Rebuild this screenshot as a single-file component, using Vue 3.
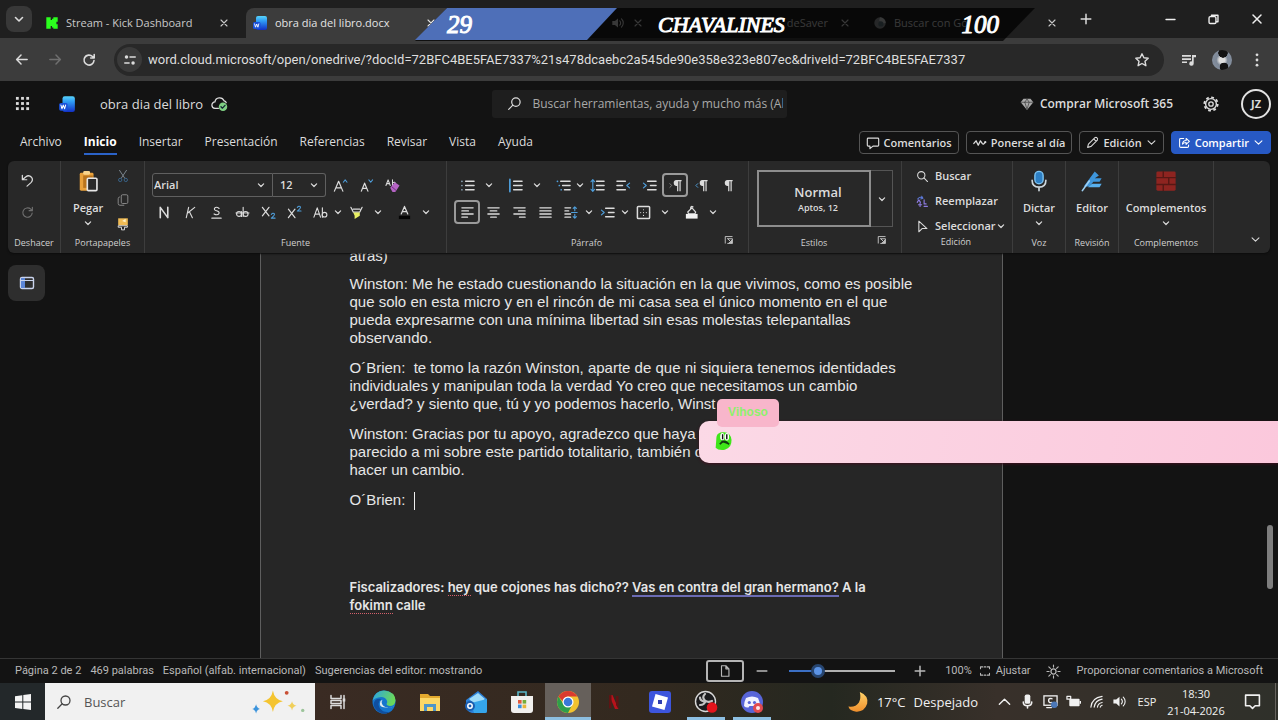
<script setup>
import { h, ref } from 'vue'

const S = (d, w = 1.3, c = 'currentColor') =>
  `<path d="${d}" fill="none" stroke="${c}" stroke-width="${w}" stroke-linecap="round" stroke-linejoin="round"/>`
const F = (d, c = 'currentColor') => `<path d="${d}" fill="${c}"/>`
const BLUE = '#4f9fdc'

const icons = {
  chevron: S('M4.5 6.5 8 10l3.5-3.5', 1.6),
  down: S('M3 5.500 8 10.500l5-5', 1.5),
  up: S('M2.5 11 8 5.5 13.5 11', 1.5),
  close: S('M4 4l8 8M12 4l-8 8', 1.5),
  plus: S('M8 2.5v11M2.5 8h11', 1.7),
  minus: S('M2.5 8h11', 1.7),
  back: S('M14 8H3M7.500 3.300 2.800 8l4.700 4.700', 1.6),
  forward: S('M2 8h11M8.500 3.300 13.200 8l-4.700 4.700', 1.6),
  reload: S('M13 8.500a5 5 0 1 1-1.500-4L13 6M13.200 2.500V6H9.700', 1.6),
  tune: '<circle cx="4" cy="4.500" r="2" fill="currentColor"/><circle cx="11.500" cy="11.500" r="2" fill="currentColor"/>' + S('M8 4.500h6M2 11.500h5', 1.6),
  star: S('M8 1.800l1.900 4 4.300.5-3.200 3 .9 4.400L8 11.500l-3.900 2.200.9-4.400-3.200-3 4.300-.5z', 1.4),
  music: F('M1 3h9v1.700H1zM1 6.200h9v1.700H1zM1 9.400h5v1.700H1z') + F('M11 3h4v2.200h-2.300v6.300a2.200 2.200 0 1 1-1.700-2.100z'),
  dots: '<circle cx="8" cy="2.800" r="1.400" fill="currentColor"/><circle cx="8" cy="8" r="1.400" fill="currentColor"/><circle cx="8" cy="13.200" r="1.400" fill="currentColor"/>',
  restore: '<rect x="2.500" y="4.500" width="8.500" height="8.500" rx="1.500" fill="none" stroke="currentColor" stroke-width="1.700"/>' + S('M5.500 4V2.800h8v8h-1.800', 1.7),
  sound: F('M1.500 5.800h3L8 2.800v10.400L4.500 10.200h-3z') + S('M10 5.500a3.500 3.500 0 0 1 0 5M12 3.300a6.500 6.500 0 0 1 0 9.400', 1.2),
  kick: F('M1.500 1.500h5v3H8V3h1.500V1.500h5v5H13V8h-1.500v0H13v1.500h1.500v5h-5V13H8v-1.500H6.500v3h-5z', '#2bff1e'),
  word: '<defs><linearGradient id="wg" x2="0" y2="1"><stop offset="0" stop-color="#58d4fb"/><stop offset=".35" stop-color="#2f9cf5"/><stop offset="1" stop-color="#1230c4"/></linearGradient></defs><path d="M4 3Q4 1 6 1h7q2 0 2 2v10q0 2-2 2H6q-2 0-2-2z" fill="url(#wg)"/><rect x="1" y="7" width="7.500" height="7" rx="1.500" fill="#1a50d8"/>' + S('M2.600 8.900l.9 3.300 1.200-3.200 1.200 3.200.9-3.300', 0.9, '#fff'),
  google: '<circle cx="8" cy="8" r="6.500" fill="#8a8d90"/><path d="M8 1.500A6.500 6.500 0 0 1 14.500 8l-4 .5L7 5z" fill="#c5c8ca"/><circle cx="9" cy="9" r="3" fill="#5c7078"/>',
  waffle: [2.5, 8, 13.5].flatMap(y => [2.5, 8, 13.5].map(x => `<rect x="${x - 1.5}" y="${y - 1.5}" width="3" height="3" fill="currentColor"/>`)).join(''),
  cloud: S('M7 12.500H4a3 3 0 0 1-.3-6A4.500 4.500 0 0 1 12.300 5.500M12.300 5.500q1.700.3 2 1.700', 1.2) + '<circle cx="11.300" cy="11" r="4" fill="#7fcf83"/>' + S('M9.400 11l1.400 1.400 2.400-2.700', 1.2, '#123'),
  search: '<circle cx="9.500" cy="6.500" r="4.500" fill="none" stroke="currentColor" stroke-width="1.300"/>' + S('M6.200 9.800 1.800 14.200'),
  find: '<circle cx="6.500" cy="6.500" r="4.500" fill="none" stroke="currentColor" stroke-width="1.300"/>' + S('M9.800 9.800 14.200 14.200'),
  diamond: F('M4 2h8l3.200 4L8 14.800.8 6z', '#a9a9a9') + S('M1 6h14M5.500 6 8 14l2.500-8L8 2.300 5.500 6', 0.8, '#3b3b3b'),
  gear: '<circle cx="8" cy="8" r="5.400" fill="none" stroke="currentColor" stroke-width="1.400"/><circle cx="8" cy="8" r="6.700" fill="none" stroke="currentColor" stroke-width="1.800" stroke-dasharray="2.800 2.460"/><circle cx="8" cy="8" r="2.200" fill="none" stroke="currentColor" stroke-width="1.300"/>',
  comment: S('M2.500 2.500h11q1 0 1 1v7q0 1-1 1H8l-3.500 3v-3h-2q-1 0-1-1v-7q0-1 1-1z', 1.3),
  catchup: S('M1 8.500l2.500-3 2.500 5 2.500-5 2 3q1.500 2 3-1', 1.5) + '<circle cx="14" cy="7" r="1.300" fill="currentColor"/>',
  pencil: S('M2 14l1-4 8-8q1.500-.8 2.600.4 1.200 1.100.4 2.600l-8 8zM9.500 3.500l3 3', 1.3),
  share: S('M7 3H3.500q-1.500 0-1.500 1.500v8Q2 14 3.500 14h8q1.500 0 1.500-1.500V11M5.500 10Q6 5.500 10 5.500V3l4 3.700-4 3.600V8Q7 8 5.500 10', 1.3),
  undo: S('M2.500 2.500v4.700h4.700M2.800 7 6 4.200q3.500-2.700 6.200.3 2.300 3-.5 5.800L7.500 14', 1.3),
  redo: S('M13 8.500a5 5 0 1 1-1.500-4L13 6M13.200 2.500V6H9.700', 1.2),
  paste: '<rect x="2" y="2" width="10" height="13" rx="1" fill="#e9a13b"/><rect x="4.500" y="4" width="7" height="9" fill="#b9741d"/><rect x="4.500" y="0.800" width="5" height="2.600" rx="1" fill="#f8d48c"/><rect x="7.500" y="6" width="7" height="9" rx=".8" fill="#2a2a2a" stroke="#e6e6e6" stroke-width="1.200"/>',
  cut: S('M4 1.500l6 9M12 1.500l-6 9', 1.1, '#7d8790') + '<circle cx="4.800" cy="12.500" r="1.900" fill="none" stroke="#39648a" stroke-width="1.100"/><circle cx="11.200" cy="12.500" r="1.900" fill="none" stroke="#39648a" stroke-width="1.100"/>',
  copy: '<rect x="6" y="2" width="7.500" height="10" rx="1.500" fill="none" stroke="#8a8a8a" stroke-width="1.100"/>' + S('M4 4.500q-1.500.3-1.500 2V12q0 2 2 2H9', 1.1, '#8a8a8a'),
  brush: '<rect x="2.500" y="1.500" width="11" height="8" fill="#f0bb55"/><path d="M7 4.500l4-2.500v4z" fill="#fff3c8"/>' + S('M3 10h10v1.700H9.700v3H6.300v-3H3z', 1.1, '#dcdcdc'),
  grow: S('M1.500 14 6 3.500 10.500 14M3.300 10.500h5.400', 1.3) + S('M11 4.500l2-2.500 2 2.500', 1.1, BLUE),
  shrink: S('M2.500 14 6 5.500 9.500 14M4 11h4', 1.3) + S('M10.500 2l2 2.500 2-2.500', 1.1, BLUE),
  clear: S('M1 8l2.300-6 2.300 6M1.800 6h3M8 2v6M8 5q3-1.500 3 1.300T8 7.500', 1.1) + F('M5.500 10.500l5-6 5 3.500-4.500 7H8z', '#b565c4') + S('M7.500 9.500l4 3.500', 1, '#6c2f7b'),
  bold: S('M3.500 13.500v-11l8 11v-11', 1.7),
  italic: S('M6 2.500 3.500 13.500M12.500 2.500 5 8.500M7 7.500l3 6', 1.2),
  under: S('M10.800 3.700Q8 1.300 6 3.300 5 5.500 8 6.200q3.500.8 2.600 3-1.600 2.300-5.200.3M3 14h10', 1.2),
  strike: S('M1 8.500h14', 1) + '<circle cx="4.300" cy="9.500" r="2.600" fill="none" stroke="currentColor" stroke-width="1.200"/><circle cx="11.300" cy="9.500" r="2.600" fill="none" stroke="currentColor" stroke-width="1.200"/>' + S('M6.900 7v5.200M8.700 2.500v9.700', 1.2),
  sub: S('M1.500 2.500l7 9M8.500 2.500l-7 9', 1.3) + S('M11 10q2-2 3.300-.5.500 1.500-3.300 4.500h4', 1.1, BLUE),
  sup: S('M1.500 4.500l7 9M8.500 4.500l-7 9', 1.3) + S('M11 2.500q2-2 3.300-.5.500 1.500-3.300 4.500h4', 1.1, BLUE),
  casing: S('M1 13 4.500 3 8 13M2.300 9.700h4.400M10 3v10', 1.2) + '<circle cx="12.300" cy="10.300" r="2.500" fill="none" stroke="currentColor" stroke-width="1.200"/>',
  mark: S('M2 2.500l2.500 5h7L14 2.500M4.500 4.500h7', 1.3) + F('M4.500 8h7v3.500L6 15V11.500z', '#e8ef63'),
  color: S('M4.500 9.500 8 1.500l3.500 8M5.700 7h4.600', 1.3) + '<rect x="2" y="11.500" width="12" height="3.500" fill="#050505"/>',
  bullets: S('M6 3.500h9M6 8h9M6 12.500h9', 1.5) + S('M2 3.500h.1M2 8h.1M2 12.500h.1', 1.8, '#8aa3b5'),
  numbers: S('M6 3.500h9M6 8h9M6 12.500h9', 1.5) + S('M2 1.500v13', 1.8, BLUE),
  levels: S('M5 3.500h10M7 8h8M9 12.500h6', 1.5) + S('M1.500 3.500h.1M3.500 8h.1M5.500 12.500h.1', 1.8, BLUE),
  spacing: S('M7 3.500h8M7 8h8M7 12.500h8', 1.5) + S('M3 2v12M1 4l2-2.300L5 4M1 12l2 2.300L5 12', 1.2, BLUE),
  outdent: S('M1 3.500h9M1 8h6M1 12.500h9', 1.5) + S('M14.500 5.500 11.500 8l3 2.500', 1.2, BLUE),
  indent: S('M6 3.500h9M9 8h6M6 12.500h9', 1.5) + S('M1.500 5.500 4.500 8l-3 2.500', 1.2, BLUE),
  pilcrow: F('M8 2h5.500v1.500h-1V14h-1.300V3.500H10V14H8.700V8.500A3.200 3.200 0 0 1 8 2z'),
  ltr: F('M9 2h5.500v1.500h-1V14h-1.300V3.500H11V14H9.700V8.500A3.200 3.200 0 0 1 9 2z') + S('M2 6l2 2-2 2', 1, '#888'),
  rtl: F('M9 2h5.500v1.500h-1V14h-1.300V3.500H11V14H9.700V8.500A3.200 3.200 0 0 1 9 2z') + S('M4 6 2 8l2 2', 1, BLUE),
  left: S('M2 3h12M2 6.300h7M2 9.600h12M2 13h6', 1.4),
  center: S('M2 3h12M4.500 6.300h7M2 9.600h12M5 13h6', 1.4),
  right: S('M2 3h12M7 6.300h7M2 9.600h12M8 13h6', 1.4),
  justify: S('M2 3h12M2 6.300h12M2 9.600h12M2 13h12', 1.4),
  lines: S('M1 3h6M1 6.300h4M1 9.600h6M1 13h6', 1.4) + S('M8 8h6M11.500 2v4M9.800 3.700l1.700-1.700 1.700 1.700M11.500 14v-4M9.800 12.300l1.700 1.700 1.700-1.700', 1.2, BLUE),
  borders: '<rect x="1.500" y="1.500" width="13" height="13" rx="1" fill="none" stroke="currentColor" stroke-width="1.600"/>' + S('M8 5v.1M8 8v.1M8 11v.1M5 8v.1M11 8v.1', 1.2),
  shade: S('M4 7.500 8.500 3l4 4.500-1 2H5zM7 4.500q0-4 2.500-2.500', 1.3) + F('M2 9.500h12.500v5H2z', '#f1f1f1'),
  launcher: S('M2 13V2.500h11M6 6h7.500v7.500H6M6 6l6 6M12 8.500V12H8.500', 1.3),
  replace: S('M2 5q3-4 6-1M7 1.500 8.500 4 5.800 4.800', 1.3, '#5c79d9') + S('M1.500 9l2-3 2 3M10 6v5h2.500M3 12h4M5 10v4M10 14h4', 1.4, '#8d7be0'),
  select: S('M3.500 1.500v13l4-4h6z', 1.3),
  mic: '<rect x="5" y="1" width="6" height="9" rx="3" fill="#2d7fc4" stroke="#7cc4f4" stroke-width="1"/>' + S('M3 7.500q0 5 5 5t5-5M8 12.500V15', 1.2, '#cfd8de'),
  editor: F('M2 12 10 1l3 3-3 2h5l-1.500 2.500H9L6 12z', '#3e96dc') + F('M8 10h7l-1.500 2.500H5z', '#58b0ee') + S('M1 15l5-7', 1.2, '#9fd1f4'),
  addins: '<rect x="1" y="1" width="14" height="14" rx="1" fill="#8e2420"/>' + S('M1 5.500h14M1 10.500h14M6 1v4.500M10 5.500v5M6 10.500V15', 1, '#561814'),
  panel: '<rect x="1.500" y="2.500" width="13" height="11" rx="1.500" fill="none" stroke="#c9d3ec" stroke-width="1.400"/><rect x="2" y="3" width="4" height="10" fill="#5c86d8"/>' + S('M2 5.500h12', 1.2, '#c9d3ec'),
  page: S('M4 2h5l3.500 3.500V14H4zM9 2v3.500h3.500', 1.3),
  fit: S('M2 5V2.500h3M11 2.500h3V5M14 11v2.500h-3M5 13.500H2V11M7 2.500h2M7 13.500h2', 1.4),
  sun: '<circle cx="8" cy="8" r="2.700" fill="none" stroke="currentColor" stroke-width="1.300"/>' + S('M8 1v2.300M8 12.700V15M1 8h2.300M12.700 8H15M3 3l1.700 1.700M11.300 11.300 13 13M13 3l-1.700 1.700M4.700 11.300 3 13', 1.2),
  windows: F('M0 2.200 7.300 1.200v6.400H0zM8.300 1 16 0v7.600H8.300zM0 8.500h7.300v6.400L0 13.900zM8.300 8.500H16V16l-7.700-1z', '#f4f4f4'),
  sparkle: '<path d="M31 2q2 12 13 14-11 2-13 14-2-12-13-14 11-2 13-14z" fill="#f4c430"/><path d="M9 20q1 5 5 6-4 1-5 6-1-5-5-6 4-1 5-6z" fill="#3c94dc"/><path d="M56 16q1 5 6 6-5 1-6 6-1-5-6-6 5-1 6-6z" fill="#f0cf5a"/><circle cx="49" cy="5" r="2.500" fill="#c94f35"/><circle cx="70" cy="28" r="2.200" fill="#9cc49a"/>',
  taskview: S('M1 1.500v3h10v-3M1 14.500v-3h10v3M1 6.500h10v3H1zM14 1.500v13', 1.5) + F('M12.700 4.500h2.600v3h-2.600z'),
  edge: '<defs><linearGradient id="eg" x2="1" y2=".3"><stop offset="0" stop-color="#2aa3e8"/><stop offset="1" stop-color="#6ad85a"/></linearGradient></defs><circle cx="12" cy="12" r="11.500" fill="#1575cc"/><path d="M.6 10.500Q3 .5 12 .5q11 1 11.500 10-.5 5.500-6 5.500-3-.3-3-2 1-1 .6-3-1.500-4-6-4Q3 7.500.6 10.500z" fill="url(#eg)"/><path d="M9 9q-4.500 4-1 9.500 4 5 11 3-7 4.500-13.500-.5Q-1 15 3.500 10q2.500-2 5.500-1z" fill="#0f4f9f"/><path d="M10.500 9.800q-2 3 .8 6 3 3 8 1.700 2.500-1 3-1.500-3.500 3-9 1.500Q6 17.500 8.500 11z" fill="#dfe9ee"/>',
  explorer: '<path d="M2 4h8l2 2h10v15H2z" fill="#e3a92e"/><rect x="2" y="8" width="20" height="13" fill="#fbd766"/><path d="M6 21v-7h12v7h-3v-4H9v4z" fill="#4d95c8"/>',
  mail: '<path d="M2 10 14 1l9 8v12q0 2-2 2H8q-6-2-6-6z" fill="#2b7fd6"/><path d="M5 9 14 3l7 6-8 7z" fill="#9fdcf8"/><path d="M7 13 23 9v12q0 2-2 2H10z" fill="#35a5ea"/><circle cx="6" cy="16" r="5" fill="#1b5eb0"/><circle cx="6" cy="16" r="2.200" fill="none" stroke="#fff" stroke-width="1.500"/>',
  store: '<path d="M8 6V2h8v4" fill="none" stroke="#59b6c8" stroke-width="1.600"/><path d="M1 6h22v14q0 3-3 3H4q-3 0-3-3z" fill="#f2f0ee"/><rect x="8" y="10" width="3.600" height="3.600" fill="#e2573a"/><rect x="12.600" y="10" width="3.600" height="3.600" fill="#74ad3a"/><rect x="8" y="14.600" width="3.600" height="3.600" fill="#3a8edb"/><rect x="12.600" y="14.600" width="3.600" height="3.600" fill="#e8b53a"/>',
  chrome: '<circle cx="12" cy="12" r="11" fill="#f2c230"/><path d="M2.500 6.500A11 11 0 0 0 12 23l4.300-8.500L7.700 14.500z" fill="#2f9e4b"/><path d="M2.500 6.500A11 11 0 0 1 21.500 6.500H12q-4 .5-5 5z" fill="#d93a2f"/><circle cx="12" cy="12" r="5.500" fill="#fff"/><circle cx="12" cy="12" r="4.300" fill="#3b78d8"/>',
  netflix: F('M7 5h3.500l6 14H13z', '#b8121b') + F('M7 5h2.500v13l-2.500.5zM14 6h2.500v13l-2.500-4z', '#5e1414'),
  roblox: '<rect x="1" y="1" width="22" height="22" rx="3" fill="#3d55dc"/><path d="M7.500 4 20 7.500 16.500 20 4 16.500z" fill="#fff"/><rect x="10" y="10" width="4" height="4" fill="#2f3fb0"/>',
  obs: '<circle cx="11.500" cy="11.500" r="10" fill="#1b1b1d" stroke="#d8d8d8" stroke-width="1.400"/>' + S('M11 4q-3.500 3 0 6.500 3 2.500 7 .5M11.500 11q-1 4-5.500 4M6 7.500q0 3 4 4', 2.2, '#c2c2c2') + '<circle cx="18" cy="17.500" r="5.300" fill="#e3141c"/>',
  discord: '<circle cx="12" cy="12" r="11" fill="#5865d8"/><path d="M6 8q6-3 12 0 2 4 2 8-3 2-4.500 1.500L14.500 16h-5l-1 1.500Q6 18 4 16q0-4 2-8z" fill="#f2f3ff"/><circle cx="9.300" cy="12.500" r="1.600" fill="#5865d8"/><circle cx="14.500" cy="12.500" r="1.600" fill="#5865d8"/><circle cx="18" cy="18" r="5" fill="#e24a50"/><circle cx="18" cy="18" r="2" fill="#ffe6e6"/>',
  moon: '<defs><linearGradient id="mg" x2="0" y2="1"><stop offset="0" stop-color="#ffd269"/><stop offset="1" stop-color="#ef8f2c"/></linearGradient></defs><path d="M14 1q10 4 8 13-3 9-12 8.500Q3 22 1.500 17q8 1 11.500-4.500Q15.500 7.500 14 1z" fill="url(#mg)"/>',
  mictray: '<rect x="5" y="0.500" width="6" height="10" rx="2" fill="currentColor"/>' + S('M3.500 8.500q0 4 4.500 4t4.500-4M8 12.500V15', 1.7),
  pc: '<rect x="1" y="2" width="14" height="10" fill="none" stroke="currentColor" stroke-width="1.400"/>' + S('M4 14.500h5M9.500 5Q6 4 6 7t3.500 2', 1.5) + '<circle cx="12" cy="11.500" r="3.500" fill="#4c78b8"/>',
  battery: '<rect x="3.500" y="5" width="11" height="8" rx="1" fill="currentColor"/>' + S('M1 2.500h4v3H1z', 1.3) + F('M14.500 7.500H16v3h-1.500z'),
  wifi: S('M2 14Q3 4 14 2.500M5.500 14q1-7 8.500-8.500M9 14q.5-4 5-5M12 14q.5-1.500 2-2', 1.2),
  notif: S('M1.500 2h13v10h-4L8 14.500 5.500 12h-4z', 1.5),
  slime: '<path d="M3 7Q4 1 12 1.500q8 .5 9 9Q21.500 20 13 22.500 5 23.500 2 20z" fill="#3fe619"/><ellipse cx="10" cy="7" rx="2.600" ry="4.500" fill="#fff"/><ellipse cx="15.500" cy="7" rx="2.600" ry="4.500" fill="#fff"/><path d="M9.500 4h1.700v6H9.500zM14.500 4h1.700v6h-1.700z" fill="#111"/><path d="M7 16q5-7 11 0M9 12l8 3" fill="none" stroke="#123a10" stroke-width="2"/>',
}

const Icon = ({ name, size = 16, box = 16, wide }) =>
  h('svg', { width: wide || size, height: size, viewBox: `0 0 ${wide || box} ${box}`, 'aria-hidden': 'true', innerHTML: icons[name] })
Icon.props = ['name', 'size', 'box', 'wide']

const menu = ['Archivo', 'Inicio', 'Insertar', 'Presentación', 'Referencias', 'Revisar', 'Vista', 'Ayuda']

const fontTop = [['grow', 'Aumentar fuente'], ['shrink', 'Disminuir fuente'], ['clear', 'Borrar formato']]
const fontRow = [
  ['bold', 'Negrita'], ['italic', 'Cursiva'], ['under', 'Subrayado'], ['strike', 'Tachado'],
  ['sub', 'Subíndice'], ['sup', 'Superíndice'], ['casing', 'Mayúsculas y minúsculas'], ['chevron', 'Más', 'mid'],
  ['mark', 'Resaltado'], ['chevron', 'Más', 'wide'], ['color', 'Color de fuente'], ['chevron', 'Más', 'wide'],
]
const paraTop = [
  ['bullets', 'Viñetas'], ['chevron', 'Más', 'wide'], ['numbers', 'Numeración'], ['chevron', 'Más', 'wide'],
  ['levels', 'Lista multinivel'], ['chevron', 'Más', 'narrow'], ['spacing', 'Espaciado'], ['outdent', 'Reducir sangría'],
  ['indent', 'Aumentar sangría'], ['ltr', 'Izquierda a derecha', 'on'], ['rtl', 'Derecha a izquierda'], ['pilcrow', 'Mostrar marcas'],
]
const paraRow = [
  ['left', 'Alinear a la izquierda', 'on'], ['center', 'Centrar'], ['right', 'Alinear a la derecha'], ['justify', 'Justificar'],
  ['lines', 'Interlineado'], ['chevron', 'Más', 'mid'], ['indent', 'Sangría especial'], ['chevron', 'Más', 'mid'],
  ['borders', 'Bordes'], ['chevron', 'Más', 'wide'], ['shade', 'Sombreado'], ['chevron', 'Más', 'wide'],
]
const apps = [
  ['taskview', 'Vista de tareas'], ['edge', 'Edge'], ['explorer', 'Explorador'], ['mail', 'Correo'], ['store', 'Tienda'],
  ['chrome', 'Chrome', 'open active'], ['netflix', 'Netflix'], ['roblox', 'Roblox'], ['obs', 'OBS', 'open'], ['discord', 'Discord', 'open'],
]
const tray = [['up', 'Iconos ocultos'], ['mictray', 'Micrófono'], ['pc', 'Equipo'], ['battery', 'Batería'], ['wifi', 'Red'], ['sound', 'Volumen']]

const font = ref('Arial')
const size = ref('12')
const zoom = ref(24)
</script>

<template>
  <div class="screen">
    <header class="tabs">
      <button class="tab-menu" aria-label="Buscar pestañas"><Icon name="chevron" :size="16" /></button>
      <div class="tab">
        <Icon name="kick" :size="14" /><span class="tab-name">Stream - Kick Dashboard</span>
        <button aria-label="Cerrar pestaña"><Icon name="close" :size="12" /></button>
      </div>
      <div class="tab current">
        <Icon name="word" :size="16" /><span class="tab-name">obra dia del libro.docx</span>
        <button aria-label="Cerrar pestaña"><Icon name="close" :size="12" /></button>
      </div>
      <div class="tab audio">
        <span class="tab-name"></span><Icon name="sound" :size="14" />
        <button aria-label="Cerrar pestaña"><Icon name="close" :size="12" /></button>
      </div>
      <div class="tab">
        <span class="tab-name end">deSaver</span>
        <button aria-label="Cerrar pestaña"><Icon name="close" :size="12" /></button>
      </div>
      <div class="tab">
        <Icon name="google" :size="14" /><span class="tab-name">Buscar con Go</span>
        <button aria-label="Cerrar pestaña"><Icon name="close" :size="12" /></button>
      </div>
      <button class="new-tab" aria-label="Nueva pestaña"><Icon name="plus" :size="14" /></button>
      <div class="window-buttons">
        <button aria-label="Minimizar"><Icon name="minus" :size="13" /></button>
        <button aria-label="Restaurar"><Icon name="restore" :size="13" /></button>
        <button aria-label="Cerrar"><Icon name="close" :size="16" /></button>
      </div>
      <div class="score">
        <div class="score-bg"></div>
        <div class="score-blue"></div>
        <span class="score-left">29</span>
        <span class="score-name">CHAVALINES</span>
        <span class="score-right">100</span>
      </div>
    </header>

    <nav class="address">
      <button aria-label="Atrás"><Icon name="back" :size="15" /></button>
      <button class="dim" aria-label="Adelante"><Icon name="forward" :size="15" /></button>
      <button aria-label="Recargar"><Icon name="reload" /></button>
      <div class="url">
        <span class="site"><Icon name="tune" :size="14" /></span>
        <input aria-label="Dirección" value="word.cloud.microsoft/open/onedrive/?docId=72BFC4BE5FAE7337%21s478dcaebc2a545de90e358e323e807ec&driveId=72BFC4BE5FAE7337" />
        <button aria-label="Marcador"><Icon name="star" /></button>
      </div>
      <button class="media" aria-label="Multimedia"><Icon name="music" /></button>
      <button class="profile" aria-label="Perfil"></button>
      <button class="more" aria-label="Menú"><Icon name="dots" /></button>
    </nav>

    <div class="title">
      <div class="title-left">
        <button aria-label="Aplicaciones"><Icon name="waffle" :size="15" /></button>
        <Icon name="word" :size="18" />
        <span class="doc-name">obra dia del libro</span>
        <Icon name="cloud" :size="17" />
      </div>
      <div class="find">
        <Icon name="search" :size="15" />
        <input aria-label="Buscar" placeholder="Buscar herramientas, ayuda y mucho más (Alt+Q)" />
      </div>
      <div class="title-right">
        <button class="buy"><Icon name="diamond" :size="14" />Comprar Microsoft 365</button>
        <button aria-label="Configuración"><Icon name="gear" /></button>
        <button class="avatar">JZ</button>
      </div>
    </div>

    <div class="menu">
      <a v-for="m in menu" :key="m" href="#" :class="{ selected: m === 'Inicio' }">{{ m }}</a>
      <div class="actions">
        <button><Icon name="comment" :size="14" />Comentarios</button>
        <button><Icon name="catchup" :size="14" />Ponerse al día</button>
        <button><Icon name="pencil" :size="13" />Edición<Icon name="down" :size="11" /></button>
        <button class="share"><Icon name="share" :size="13" />Compartir<Icon name="down" :size="11" /></button>
      </div>
    </div>

    <section class="ribbon">
      <div class="group g-undo">
        <div class="stack">
          <button aria-label="Deshacer"><Icon name="undo" :size="15" /></button>
          <button class="dim" aria-label="Rehacer"><Icon name="redo" :size="15" /></button>
        </div>
        <p>Deshacer</p>
      </div>
      <div class="group g-clip">
        <div class="clip">
          <button class="big"><Icon name="paste" :size="22" /><span>Pegar</span><Icon name="chevron" :size="12" /></button>
          <div class="clip-side">
            <button aria-label="Cortar"><Icon name="cut" :size="14" /></button>
            <button aria-label="Copiar"><Icon name="copy" :size="14" /></button>
            <button aria-label="Copiar formato"><Icon name="brush" :size="14" /></button>
          </div>
        </div>
        <p>Portapapeles</p>
      </div>
      <div class="group g-font">
        <div class="row">
          <label class="pick family"><select v-model="font" aria-label="Fuente"><option>Arial</option></select><Icon name="chevron" :size="12" /></label>
          <label class="pick size"><select v-model="size" aria-label="Tamaño"><option>12</option></select><Icon name="chevron" :size="12" /></label>
          <button v-for="t in fontTop" :key="t[0]" class="tool" :aria-label="t[1]"><Icon :name="t[0]" :size="15" /></button>
        </div>
        <div class="row">
          <button v-for="(t, i) in fontRow" :key="i" class="tool" :class="t[2]" :aria-label="t[1]"><Icon :name="t[0]" :size="t[0] === 'chevron' ? 12 : 15" /></button>
        </div>
        <p>Fuente</p>
      </div>
      <div class="group g-para">
        <div class="row">
          <button v-for="(t, i) in paraTop" :key="i" class="tool" :class="t[2]" :aria-label="t[1]"><Icon :name="t[0]" :size="t[0] === 'chevron' ? 12 : 15" /></button>
        </div>
        <div class="row">
          <button v-for="(t, i) in paraRow" :key="i" class="tool" :class="t[2]" :aria-label="t[1]"><Icon :name="t[0]" :size="t[0] === 'chevron' ? 12 : 15" /></button>
        </div>
        <p>Párrafo</p>
        <button class="launch" aria-label="Opciones de párrafo"><Icon name="launcher" :size="10" /></button>
      </div>
      <div class="group g-style">
        <div class="styles">
          <button class="card"><b>Normal</b><small>Aptos, 12</small></button>
          <button class="open" aria-label="Más estilos"><Icon name="chevron" :size="12" /></button>
        </div>
        <p>Estilos</p>
        <button class="launch" aria-label="Opciones de estilos"><Icon name="launcher" :size="10" /></button>
      </div>
      <div class="group g-edit">
        <button><Icon name="find" :size="13" />Buscar</button>
        <button><Icon name="replace" :size="13" />Reemplazar</button>
        <button class="with-arrow"><Icon name="select" :size="13" />Seleccionar<Icon name="chevron" :size="12" /></button>
        <p>Edición</p>
      </div>
      <div class="group g-mid">
        <button class="big"><Icon name="mic" :size="22" /><span>Dictar</span><Icon name="chevron" :size="12" /></button>
        <p>Voz</p>
      </div>
      <div class="group g-mid">
        <button class="big"><Icon name="editor" :size="22" /><span>Editor</span></button>
        <p>Revisión</p>
      </div>
      <div class="group g-add">
        <button class="big"><Icon name="addins" :size="22" /><span>Complementos</span><Icon name="chevron" :size="12" /></button>
        <p>Complementos</p>
      </div>
      <button class="collapse" aria-label="Contraer cinta"><Icon name="down" :size="11" /></button>
    </section>

    <main class="work">
      <button class="nav-pane" aria-label="Panel de navegación"><Icon name="panel" :size="16" /></button>
      <article class="page">
        <p>atrás)</p>
        <p>Winston: Me he estado cuestionando la situación en la que vivimos, como es posible<br />que solo en esta micro y en el rincón de mi casa sea el único momento en el que<br />pueda expresarme con una mínima libertad sin esas molestas telepantallas<br />observando.</p>
        <p>O´Brien:&nbsp; te tomo la razón Winston, aparte de que ni siquiera tenemos identidades<br />individuales y manipulan toda la verdad Yo creo que necesitamos un cambio<br />¿verdad? y siento que, tú y yo podemos hacerlo, Winst</p>
        <p>Winston: Gracias por tu apoyo, agradezco que haya<br />parecido a mi sobre este partido totalitario, también c<br />hacer un cambio.</p>
        <p>O´Brien: <span class="caret"></span></p>
        <p class="notes">Fiscalizadores: <u class="spell">hey</u> que cojones has dicho?? <u class="grammar">Vas en contra del gran hermano?</u> A la<br /><u class="spell">fokimn</u> calle</p>
      </article>
      <div class="scroll"></div>
      <aside class="chat">
        <span class="user">Vihoso</span>
        <div class="bubble"><Icon name="slime" :size="20" :box="24" /></div>
      </aside>
    </main>

    <footer class="status">
      <span>Página 2 de 2</span><span>469 palabras</span><span>Español (alfab. internacional)</span><span>Sugerencias del editor: mostrando</span>
      <div class="status-right">
        <button class="view" aria-label="Vista de página"><Icon name="page" :size="14" /></button>
        <button aria-label="Alejar"><Icon name="minus" :size="14" /></button>
        <input v-model="zoom" type="range" aria-label="Zoom" />
        <button aria-label="Acercar"><Icon name="plus" :size="14" /></button>
        <button class="pct">100%</button>
        <button class="fit"><Icon name="fit" :size="12" />Ajustar</button>
        <button class="sun" aria-label="Modo claro"><Icon name="sun" :size="15" /></button>
        <a href="#">Proporcionar comentarios a Microsoft</a>
      </div>
    </footer>

    <footer class="taskbar">
      <button class="start" aria-label="Inicio"><Icon name="windows" /></button>
      <label class="task-search"><Icon name="search" /><input aria-label="Buscar" placeholder="Buscar" /><Icon class="spark" name="sparkle" :size="34" :box="34" :wide="74" /></label>
      <button v-for="a in apps" :key="a[0]" class="app" :class="a[2]" :aria-label="a[1]"><Icon :name="a[0]" :size="a[0] === 'taskview' ? 16 : 24" :box="a[0] === 'taskview' ? 16 : 24" /></button>
      <div class="tray">
        <button class="weather"><Icon name="moon" :size="22" :box="24" /><span>17°C</span><span>Despejado</span></button>
        <button v-for="t in tray" :key="t[0]" class="tray-icon" :aria-label="t[1]"><Icon :name="t[0]" :size="15" /></button>
        <button class="lang">ESP</button>
        <button class="clock"><span>18:30</span><span>21-04-2026</span></button>
        <button class="notice" aria-label="Notificaciones"><Icon name="notif" :size="17" /></button>
      </div>
    </footer>
  </div>
</template>

<style>
html, body { margin: 0; background: #131313; }
</style>

<style scoped>
.screen { height: 100vh; display: flex; flex-direction: column; overflow: hidden; color: #dcdcdc; font: 12px/16px "Open Sans", "Noto Sans", sans-serif; }
.screen * { box-sizing: border-box; }
button { margin: 0; padding: 0; border: 0; background: none; color: inherit; font: inherit; display: flex; align-items: center; justify-content: center; white-space: nowrap; }
input, select { min-width: 0; margin: 0; padding: 0; border: 0; outline: 0; background: none; color: inherit; font: inherit; }
a { color: inherit; text-decoration: none; }
p { margin: 0; }
svg { flex: none; display: block; }
.dim { color: #6f6f6f; }

.tabs { position: relative; flex: none; height: 38px; display: flex; align-items: center; background: #1f1f1f; font-size: 11px; }
.tab-menu { width: 26px; height: 26px; margin: 0 7px 0 6px; border-radius: 8px; background: #383838; }
.tab { width: 207px; height: 30px; display: flex; align-items: center; gap: 7px; padding: 0 16px 0 6px; color: #c9c9c9; align-self: end; }
.tab-name { flex: 1; white-space: nowrap; overflow: hidden; }
.tab-name.end { text-align: right; padding-right: 4px; }
.tab.current { background: #3c3c3c; color: #e4e4e4; border-radius: 8px 8px 0 0; }
.new-tab { margin-left: 5px; }
.window-buttons { margin-left: auto; display: flex; color: #efefef; }
.window-buttons button { width: 43px; }
.score { position: absolute; left: 415px; top: 8px; width: 620px; height: 33px; color: #fff; font: italic 25px/33px "Liberation Serif", serif; -webkit-text-stroke: 1px #fff; z-index: 2; }
.score span { position: absolute; top: 0; }
.score-bg, .score-blue { position: absolute; inset: 0; }
.score-bg { background: rgb(0 0 0 / 72%); clip-path: polygon(32px 0, 100% 0, 588px 100%, 0 100%); }
.score-blue { width: 202px; height: 32px; background: #4e6fb8; clip-path: polygon(32px 0, 100% 0, 172px 100%, 0 100%); }
.score-left { left: 32px; }
.score .score-name { left: 243px; font-size: 22px; }
.score .score-right { right: 36px; }

.address { flex: none; height: 43px; display: flex; align-items: center; padding: 0 12px; background: #3c3c3c; }
.address > button { width: 18px; margin-right: 16px; }
.url { flex: 1; height: 32px; display: flex; align-items: center; border-radius: 16px; background: #282828; padding: 0 14px 0 3px; }
.url input { flex: 1; font-size: 13px; font-family: Roboto, sans-serif; color: #dedede; }
.site { width: 25px; height: 25px; margin-right: 6px; border-radius: 50%; background: #3a3a3a; display: flex; align-items: center; justify-content: center; }
.address > .media { margin: 0 14px 0 16px; }
.address > .profile { height: 20px; width: 20px; border-radius: 50%; background: radial-gradient(circle at 55% 15%, #111 0 22%, transparent 24%), radial-gradient(circle at 60% 85%, #111 0 20%, transparent 22%), radial-gradient(circle, #ddd 0 20%, #7d8897 40%, #8b95a5); }
.address > .more { margin-right: 0; }

.title { flex: none; height: 45px; display: grid; grid-template-columns: 1fr 295px 1fr; align-items: center; }
.title-left { display: flex; align-items: center; padding-left: 15px; }
.title-left > button { margin-right: 28px; }
.doc-name { margin: 0 8px 0 24px; font-size: 13px; }
.find { height: 28px; display: flex; align-items: center; gap: 11px; padding: 0 4px 0 15px; background: #1e1e1e; border-radius: 3px; }
.find input { flex: 1; font-size: 12px; }
.find input::placeholder { color: #a9a9a9; opacity: 1; }
.title-right { display: flex; justify-content: flex-end; align-items: center; padding-right: 7px; }
.buy { gap: 6px; margin-right: 30px; font-size: 12px; font-weight: 600; }
.avatar { width: 30px; height: 30px; margin-left: 22px; border: 2px solid #e2e2e2; border-radius: 50%; font-size: 11px; font-weight: 700; }

.menu { flex: none; height: 35px; display: flex; align-items: center; gap: 22px; padding: 0 7px 2px 20px; font-size: 12px; }
.menu a { padding: 4px 0 3px; border-bottom: 2px solid transparent; }
.menu .selected { font-weight: 700; color: #fff; border-color: #2b63c9; }
.actions { margin-left: auto; display: flex; gap: 7px; font-size: 11px; font-weight: 600; }
.actions button { height: 23px; padding: 0 6px; gap: 4px; border: 1px solid #555; border-radius: 4px; }
.actions .share { background: #2759c4; border-color: #2759c4; color: #fff; }

.ribbon { flex: none; margin: 0 8px; height: 92px; display: flex; border-radius: 6px; background: #282828; position: relative; z-index: 1; box-shadow: 0 1px 2px #0c0c0c; }
.group { position: relative; flex: none; display: flex; flex-direction: column; gap: 3px; padding: 12px 7px 4px; border-right: 1px solid #3d3d3d; }
.group > p { margin-top: auto; text-align: center; font-size: 9px; line-height: 12px; color: #d0d0d0; white-space: nowrap; }
.g-undo { width: 53px; padding: 12px 0 4px; }
.stack { display: flex; flex-direction: column; gap: 17px; padding-left: 12px; align-items: flex-start; }
.g-clip { width: 84px; }
.clip { display: flex; justify-content: space-between; padding: 0 7px 0 5px; }
.clip-side { display: flex; flex-direction: column; gap: 10px; margin-top: -4px; }
.big { flex-direction: column; justify-content: flex-start; font-size: 11px; font-weight: 600; margin-top: -3px; }
.big span { margin-top: 7px; line-height: 18px; }
.g-font { width: 302px; }
.g-para { width: 302px; }
.row { display: flex; height: 24px; }
.tool { width: 26px; height: 24px; }
.tool.narrow { width: 8px; }
.tool.mid { width: 10px; }
.tool.wide { width: 22px; padding-right: 4px; }
.tool.on { border: 2px solid #9a9a9a; border-radius: 4px; }
.pick { display: flex; align-items: center; border: 1px solid #606060; height: 24px; padding: 0 5px 0 1px; font-weight: 600; font-size: 11px; }
.pick select { flex: 1; appearance: none; }
.pick.family { width: 121px; border-radius: 3px 0 0 3px; }
.pick.size { width: 53px; border-left: 0; border-radius: 0 3px 3px 0; padding-left: 7px; margin-right: 1px; }
.launch { position: absolute; right: 14px; bottom: 8px; }
.group.g-para > p, .group.g-style > p { padding-right: 22px; }
.g-style { width: 153px; padding: 9px 8px 4px; }
.styles { display: flex; height: 57px; border: 1px solid #555; }
.card { width: 114px; margin: -1px 0 -1px -1px; border: 2px solid #8d8d8d; flex-direction: column; font-weight: 600; padding-left: 8px; }
.card b { font-size: 13px; font-weight: 600; line-height: 18px; }
.card small { font-size: 9px; line-height: 14px; }
.styles .open { flex: 1; }
.g-edit { width: 111px; padding: 5px 0 4px 14px; gap: 5px; font-size: 11px; font-weight: 600; align-items: flex-start; }
.g-edit > button { gap: 6px; height: 20px; }
.g-edit > .with-arrow svg:last-child { margin-left: -7px; }
.g-edit > p { align-self: stretch; padding-right: 16px; font-weight: 400; margin-top: -5px; }
.g-mid { width: 53px; }
.g-mid, .g-add { padding-left: 0; padding-right: 0; }
.g-add { width: 95px; }
.collapse { margin: auto 9px 8px auto; }

.work { flex: 1; min-height: 0; position: relative; padding: 0 16px 0 0; overflow: hidden; border-bottom: 1px solid #353535; }
.nav-pane { position: absolute; left: 8px; top: 12px; width: 37px; height: 36px; border-radius: 8px; background: #2e2e2e; }
.page { max-width: 743px; height: 100%; margin: 0 auto; padding: 0 0 0 89px; background: #262626; border: solid #5e5e5e; border-width: 0 1px; color: #e6e6e6; font: 15px/18px "Liberation Sans", Arial, sans-serif; white-space: nowrap; overflow: hidden; }
.page p { margin-bottom: 12px; }
.page p:first-child { margin: -6px 0 10px; }
.caret { display: inline-block; width: 1px; height: 18px; background: #eee; vertical-align: middle; margin-left: 4px; }
.page .notes { margin-top: 68px; font: 600 13px/18px Inter, "Open Sans", sans-serif; }
u { text-decoration: none; }
.spell { border-bottom: 1px dotted #d4606c; }
.grammar { border-bottom: 2px solid #6b6bb4; }
.scroll { position: absolute; right: 5px; top: 272px; width: 6px; height: 64px; border-radius: 3px; background: #7e7e7e; }
.chat { position: absolute; left: 699px; right: 0; top: 146px; }
.user { position: absolute; left: 18px; width: 62px; height: 28px; border-radius: 5px; background: #f8b6cb; color: #8df06c; font: bold 12px/27px "Liberation Sans", sans-serif; text-align: center; z-index: 1; }
.bubble { margin-top: 22px; height: 42px; border-radius: 10px 0 0 10px; padding: 10px 15px; background: linear-gradient(100deg, #fbd9e6, #fbc8dc); box-shadow: 0 1px 3px #40101f; }

.status { flex: none; height: 24px; display: flex; align-items: center; gap: 9px; padding: 0 15px; font: 11px/16px Roboto, sans-serif; color: #b9b9b9; white-space: nowrap; }
.status-right { margin-left: auto; display: flex; align-items: center; }
.view { width: 38px; height: 22px; margin-right: 11px; border: 2px solid #b5b5b5; border-radius: 3px; }
.status input { width: 106px; height: 16px; margin: 0 18px 0 20px; appearance: none; }
.status input::-webkit-slider-runnable-track { height: 2px; background: linear-gradient(90deg, #3b6fc4 24%, #b0b0b0 24%); }
.status input::-webkit-slider-thumb { appearance: none; width: 14px; height: 14px; margin-top: -6px; border-radius: 50%; background: #5b93e6; border: 3px solid #27456f; }
.pct { margin: 0 7px 0 18px; }
.fit { gap: 5px; margin-right: 15px; }
.sun { margin-right: 16px; }

.taskbar { flex: none; height: 37px; display: flex; background: linear-gradient(90deg, #23282a 0 45px, #3a2b23 315px, #33291f 50%, #252820 65%, #38302a 78%, #2f302a); }
.start { width: 45px; }
.task-search { width: 270px; display: flex; align-items: center; gap: 12px; padding: 0 9px 0 11px; background: #f1f1f1; color: #444; font-size: 13px; }
.task-search input { flex: 1; }
.task-search input::placeholder { color: #555; opacity: 1; }
.spark { width: 57px; height: 26px; }
.app { width: 46px; }
.app.active { background: #66605b; }
.app.open { border-bottom: 3px solid #8dbfe2; padding-top: 3px; }
.app.open:not(.active) { margin: 0 4px; width: 38px; }
.tray { margin-left: auto; display: flex; color: #f0f0f0; border-right: 1px solid #66635e; margin-right: 2px; }
.weather { gap: 8px; font-size: 13px; margin-right: 15px; }
.tray-icon { width: 23px; }
.lang { width: 32px; font-size: 11px; }
.clock { width: 66px; flex-direction: column; font-size: 11px; line-height: 17px; }
.notice { width: 46px; }
</style>
